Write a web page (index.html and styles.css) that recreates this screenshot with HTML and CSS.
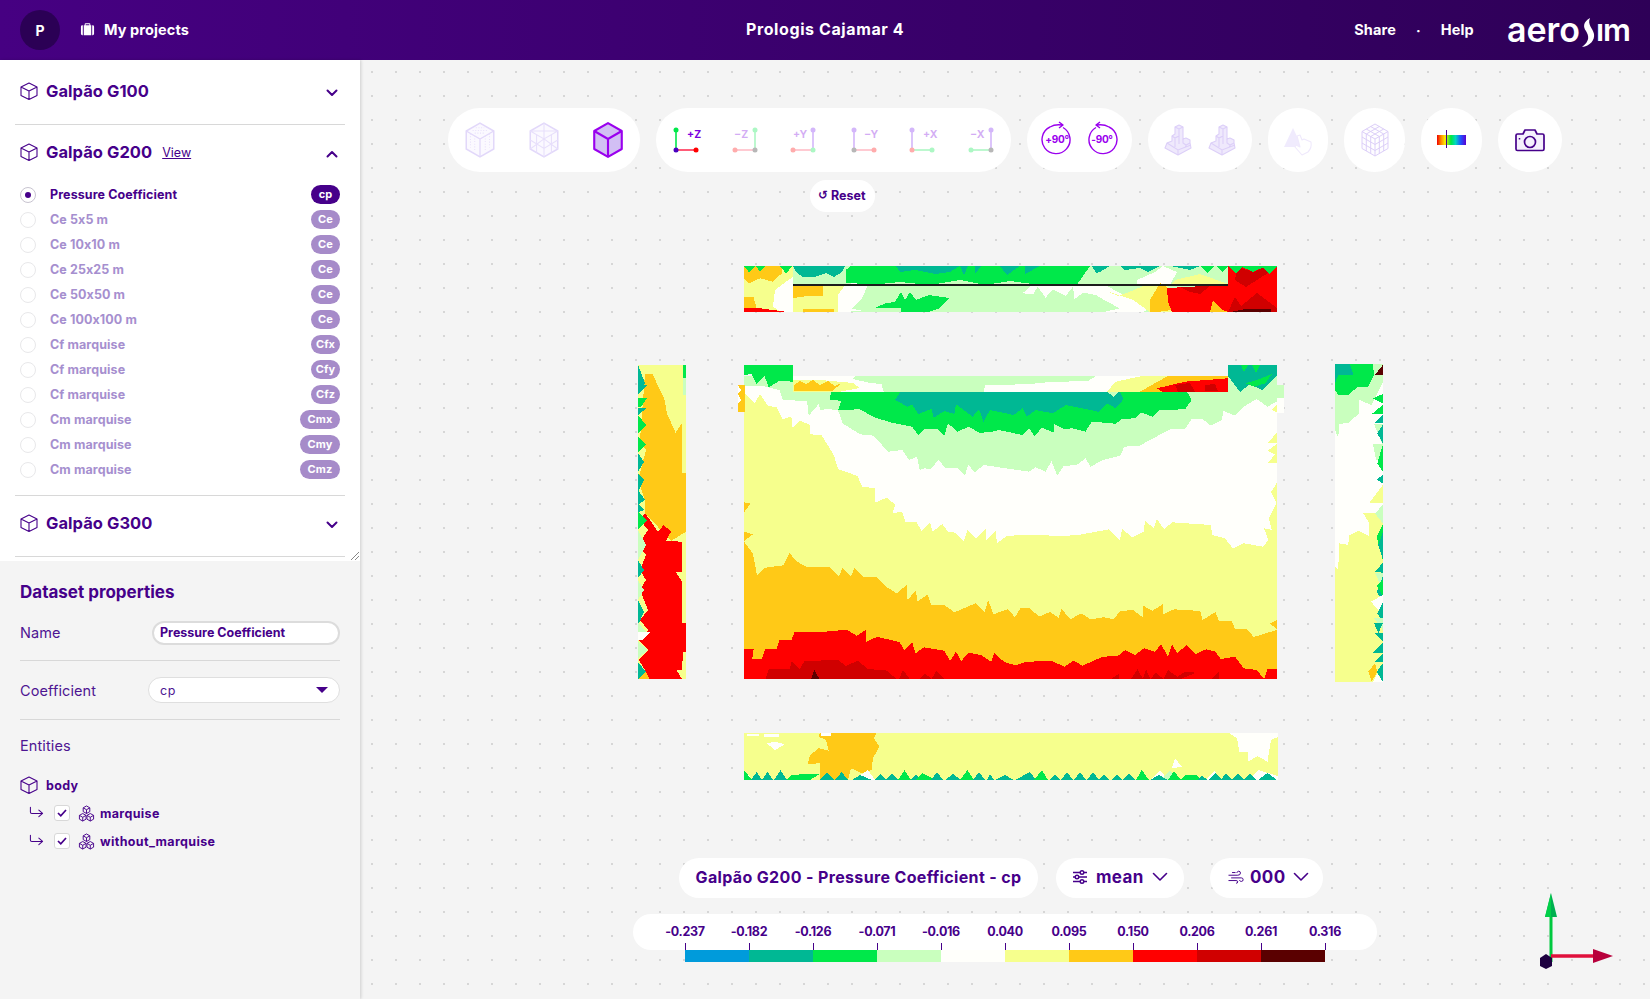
FILE: index.html
```html
<!DOCTYPE html>
<html lang="en">
<head>
<meta charset="utf-8">
<title>Prologis Cajamar 4</title>
<link rel="stylesheet" href="styles.css">
</head>
<body>
<svg class="defs" width="0" height="0" aria-hidden="true">
  <symbol id="cube" viewBox="0 0 20 20"><path d="M10 2 L18 6 V14.500 L10 18.500 L2 14.500 V6 Z M2 6 L10 10 L18 6 M10 10 V18.500" fill="none" stroke="currentColor" stroke-width="1.100" stroke-linejoin="round"/></symbol>
  <symbol id="cubes" viewBox="0 0 18 18"><path d="M9 1 L12.500 3 V7 L9 9 L5.500 7 V3 Z M5.500 3 L9 5 L12.500 3 M9 5 V9 M5 9 L8.500 11 V15 L5 17 L1.500 15 V11 Z M1.500 11 L5 13 L8.500 11 M5 13 V17 M13 9 L16.500 11 V15 L13 17 L9.500 15 V11 Z M9.500 11 L13 13 L16.500 11 M13 13 V17" fill="none" stroke="currentColor" stroke-width="1" stroke-linejoin="round"/></symbol>
  <symbol id="chev" viewBox="0 0 12 8"><path d="M1.500 1.500 L6 6 L10.500 1.500" fill="none" stroke="currentColor" stroke-width="2" stroke-linecap="round" stroke-linejoin="round"/></symbol>
  <symbol id="chev-thin" viewBox="0 0 16 10"><path d="M1.500 1.500 L8 8 L14.500 1.500" fill="none" stroke="currentColor" stroke-width="1.600" stroke-linecap="round" stroke-linejoin="round"/></symbol>
  <symbol id="sub" viewBox="0 0 16 12"><path d="M1.500 1 V6 Q1.500 7.500 3 7.500 H14 M10.500 4 L14.500 7.500 L10.500 11" fill="none" stroke="currentColor" stroke-width="1.100" stroke-linecap="round" stroke-linejoin="round"/></symbol>
  <symbol id="city" viewBox="0 0 28 32"><path d="M14 31 L1 24 L3 19 L8 17 V12 L11 10 V3 L15 1 L19 3 V15 L22 14 L26 16 V19 L27 24 Z" fill="#efe9fc" stroke="#dccff8" stroke-width="1.100" stroke-linejoin="round"/><path d="M11 3 L15 5 L19 3 M15 5 V14 M8 12 L11 14 L15 12 V20 M11 14 V23 M19 15 V19 L22 21 L26 19 M22 21 V24 M3 19 L14 26 L27 21 M14 26 V31" fill="none" stroke="#dccff8" stroke-width="1.100"/></symbol>
</svg>

<header class="topbar">
  <div class="top-left">
    <div class="avatar">P</div>
    <a class="top-link">
      <svg class="brief" viewBox="0 0 16 16"><path d="M5 3.500 V2.200 Q5 1.200 6 1.200 H10 Q11 1.200 11 2.200 V3.500 H10 V2.400 H6 V3.500 Z M1 5 Q1 3.500 2.500 3.500 H3 V14 H2.500 Q1 14 1 12.500 Z M4 3.500 H12 V14 H4 Z M13 3.500 H13.500 Q15 3.500 15 5 V12.500 Q15 14 13.500 14 H13 Z" fill="#fff"/></svg>
      My projects
    </a>
  </div>
  <div class="top-title">Prologis Cajamar 4</div>
  <div class="top-right">
    <a class="top-nav">Share</a>
    <span class="top-dot">·</span>
    <a class="top-nav">Help</a>
    <div class="logo" aria-label="aerosim">
      <span>aero</span>
      <svg class="logo-s" viewBox="0 0 14 30"><path d="M9 0 C2 4 2 9 5 13 C8 18 9 23 1 29 C9 28 14 22 13 16 C12 10 6 7 9 0 Z" fill="#fff"/></svg>
      <span class="logo-end">ım</span>
    </div>
  </div>
</header>

<div class="main">
  <aside class="sidebar">
    <div class="tree">
      <section class="item item-first">
        <div class="item-head">
          <svg class="ic20"><use href="#cube"/></svg>
          <h2>Galpão G100</h2>
          <svg class="chev"><use href="#chev"/></svg>
        </div>
      </section>
      <section class="item item-open">
        <div class="item-head">
          <svg class="ic20"><use href="#cube"/></svg>
          <h2>Galpão G200</h2>
          <a class="view">View</a>
          <svg class="chev chev-up"><use href="#chev"/></svg>
        </div>
        <ul class="datasets">
          <li class="ds ds-on"><span class="radio"></span><span class="ds-name">Pressure Coefficient</span><span class="badge">cp</span></li>
          <li class="ds"><span class="radio"></span><span class="ds-name">Ce 5x5 m</span><span class="badge">Ce</span></li>
          <li class="ds"><span class="radio"></span><span class="ds-name">Ce 10x10 m</span><span class="badge">Ce</span></li>
          <li class="ds"><span class="radio"></span><span class="ds-name">Ce 25x25 m</span><span class="badge">Ce</span></li>
          <li class="ds"><span class="radio"></span><span class="ds-name">Ce 50x50 m</span><span class="badge">Ce</span></li>
          <li class="ds"><span class="radio"></span><span class="ds-name">Ce 100x100 m</span><span class="badge">Ce</span></li>
          <li class="ds"><span class="radio"></span><span class="ds-name">Cf marquise</span><span class="badge">Cfx</span></li>
          <li class="ds"><span class="radio"></span><span class="ds-name">Cf marquise</span><span class="badge">Cfy</span></li>
          <li class="ds"><span class="radio"></span><span class="ds-name">Cf marquise</span><span class="badge">Cfz</span></li>
          <li class="ds"><span class="radio"></span><span class="ds-name">Cm marquise</span><span class="badge badge-w">Cmx</span></li>
          <li class="ds"><span class="radio"></span><span class="ds-name">Cm marquise</span><span class="badge badge-w">Cmy</span></li>
          <li class="ds"><span class="radio"></span><span class="ds-name">Cm marquise</span><span class="badge badge-w">Cmz</span></li>
        </ul>
      </section>
      <section class="item item-last">
        <div class="item-head">
          <svg class="ic20"><use href="#cube"/></svg>
          <h2>Galpão G300</h2>
          <svg class="chev"><use href="#chev"/></svg>
        </div>
      </section>
      <svg class="grip" viewBox="0 0 8 8"><path d="M8 0 L0 8 M8 4 L4 8" stroke="#888" stroke-width="1" fill="none"/></svg>
    </div>

    <div class="props">
      <h3>Dataset properties</h3>
      <div class="prop-row prop-name">
        <label>Name</label>
        <div class="input">Pressure Coefficient</div>
      </div>
      <div class="prop-row prop-coef">
        <label>Coefficient</label>
        <div class="select"><span>cp</span><i class="tri"></i></div>
      </div>
      <div class="entities-label">Entities</div>
      <div class="ent-body"><svg class="ic20"><use href="#cube"/></svg><b>body</b></div>
      <div class="ent-child">
        <svg class="ic-sub"><use href="#sub"/></svg>
        <span class="check"><svg viewBox="0 0 10 8"><path d="M1 4 L3.800 6.800 L9 1" fill="none" stroke="currentColor" stroke-width="1.700"/></svg></span>
        <svg class="ic-cubes"><use href="#cubes"/></svg>
        <b>marquise</b>
      </div>
      <div class="ent-child">
        <svg class="ic-sub"><use href="#sub"/></svg>
        <span class="check"><svg viewBox="0 0 10 8"><path d="M1 4 L3.800 6.800 L9 1" fill="none" stroke="currentColor" stroke-width="1.700"/></svg></span>
        <svg class="ic-cubes"><use href="#cubes"/></svg>
        <b>without_marquise</b>
      </div>
    </div>
  </aside>

  <main class="canvas">
    <div class="toolbar">
      <div class="tgroup g-cubes">
        <svg class="hex" viewBox="0 0 30 34"><path d="M15 1 L28 8.500 V25.500 L15 33 L2 25.500 V8.500 Z" fill="#fbf9ff" stroke="#e2d8fa" stroke-width="1.400"/><path d="M2 8.500 L15 16 L28 8.500 M15 16 V33" fill="none" stroke="#e2d8fa" stroke-width="1.200"/><path d="M6 11 V24 M10 13 V27 M20 13 V27 M24 11 V24 M8 8 L22 8 M11 5.500 H19 M10 10.500 H20" stroke="#e9e1fb" stroke-width="1" stroke-dasharray="1 1.500" fill="none"/></svg>
        <svg class="hex" viewBox="0 0 30 34"><path d="M15 1 L28 8.500 V25.500 L15 33 L2 25.500 V8.500 Z" fill="#fbf9ff" stroke="#e2d8fa" stroke-width="1.400"/><path d="M2 8.500 L15 16 L28 8.500 M15 16 V33 M15 1 V16 M2 8.500 L28 8.500 M2 25.500 L15 16 L28 25.500 M8 12 L8 29 M22 12 L22 29 M2 17 L15 25 L28 17" fill="none" stroke="#e7dffb" stroke-width="1"/></svg>
        <svg class="hex" viewBox="0 0 30 34"><path d="M15 1 L28 8.500 V25.500 L15 33 L2 25.500 V8.500 Z" fill="#d2bff4" stroke="#9a00ee" stroke-width="2" stroke-linejoin="round"/><path d="M2 8.500 L15 16 L28 8.500 M15 16 V33" fill="none" stroke="#9a00ee" stroke-width="2"/></svg>
      </div>
      <div class="tgroup g-axes">
        <svg class="axis" viewBox="0 0 40 32"><path d="M10 6 V26" stroke="#00e84a" stroke-width="1.600"/><path d="M10 26 H30" stroke="#ff3355" stroke-width="1.600"/><circle cx="10" cy="6" r="2.500" fill="#00e84a"/><circle cx="10" cy="26" r="2.500" fill="#4a00c0"/><circle cx="30" cy="26" r="2.500" fill="#ff0000"/><text x="21" y="14" class="ax-t">+Z</text></svg>
        <svg class="axis axis-off" viewBox="0 0 40 32"><path d="M30 6 V26" stroke="#00e84a" stroke-width="1.600"/><path d="M10 26 H30" stroke="#ff3355" stroke-width="1.600"/><circle cx="30" cy="6" r="2.500" fill="#00e84a"/><circle cx="30" cy="26" r="2.500" fill="#222"/><circle cx="10" cy="26" r="2.500" fill="#ff0000"/><text x="9" y="14" class="ax-t">−Z</text></svg>
        <svg class="axis axis-off" viewBox="0 0 40 32"><path d="M29 6 V26" stroke="#7a20f0" stroke-width="1.600"/><path d="M9 26 H29" stroke="#ff3355" stroke-width="1.600"/><circle cx="29" cy="6" r="2.500" fill="#7a20f0"/><circle cx="29" cy="26" r="2.500" fill="#00e84a"/><circle cx="9" cy="26" r="2.500" fill="#ff0000"/><text x="9" y="14" class="ax-t">+Y</text></svg>
        <svg class="axis axis-off" viewBox="0 0 40 32"><path d="M11 6 V26" stroke="#7a20f0" stroke-width="1.600"/><path d="M11 26 H31" stroke="#ff3355" stroke-width="1.600"/><circle cx="11" cy="6" r="2.500" fill="#7a20f0"/><circle cx="11" cy="26" r="2.500" fill="#222"/><circle cx="31" cy="26" r="2.500" fill="#ff0000"/><text x="21" y="14" class="ax-t">−Y</text></svg>
        <svg class="axis axis-off" viewBox="0 0 40 32"><path d="M10 6 V26" stroke="#7a20f0" stroke-width="1.600"/><path d="M10 26 H30" stroke="#00e84a" stroke-width="1.600"/><circle cx="10" cy="6" r="2.500" fill="#7a20f0"/><circle cx="10" cy="26" r="2.500" fill="#ff0000"/><circle cx="30" cy="26" r="2.500" fill="#00e84a"/><text x="21" y="14" class="ax-t">+X</text></svg>
        <svg class="axis axis-off" viewBox="0 0 40 32"><path d="M30 6 V26" stroke="#7a20f0" stroke-width="1.600"/><path d="M10 26 H30" stroke="#00e84a" stroke-width="1.600"/><circle cx="30" cy="6" r="2.500" fill="#7a20f0"/><circle cx="30" cy="26" r="2.500" fill="#222"/><circle cx="10" cy="26" r="2.500" fill="#00e84a"/><text x="9" y="14" class="ax-t">−X</text></svg>
      </div>
      <div class="tgroup g-rot">
        <svg class="rot" viewBox="0 0 32 36"><path d="M9 7 A14 14 0 1 0 22 7.500 M9 7 Q14 4 21 5 M18 2 L22 5 L18 8" fill="none" stroke="#9a00ee" stroke-width="1.400" stroke-linejoin="round"/><text x="16" y="23" class="rot-t">+90°</text></svg>
        <svg class="rot" viewBox="0 0 32 36"><path d="M23 7 A14 14 0 1 1 10 7.500 M23 7 Q18 4 11 5 M14 2 L10 5 L14 8" fill="none" stroke="#9a00ee" stroke-width="1.400" stroke-linejoin="round"/><text x="16" y="23" class="rot-t">-90°</text></svg>
      </div>
      <div class="tgroup g-city">
        <svg class="city"><use href="#city"/></svg>
        <svg class="city"><use href="#city"/></svg>
      </div>
      <div class="tgroup g-s60">
        <svg class="ic-pick" viewBox="0 0 30 32"><path d="M10 4 L19 23 H1 Z" fill="#f0ebfd"/><path d="M14 12 L17 11 L19 16 L21 15 L28 18 Q29 24 25 28 L19 31 L12 23 L13 21 L17 23 Z" fill="#fff" stroke="#efe9fc" stroke-width="1.100" stroke-linejoin="round"/></svg>
      </div>
      <div class="tgroup g-s61">
        <svg class="hex hex-grid" viewBox="0 0 30 34"><path d="M15 1 L28 8.500 V25.500 L15 33 L2 25.500 V8.500 Z M2 8.500 L15 16 L28 8.500 M15 16 V33 M6.300 11 V28 M10.700 13.500 V30.500 M19.300 13.500 V30.500 M23.700 11 V28 M2 14 L15 21.500 L28 14 M2 20 L15 27.500 L28 20 M6.300 6 L19.300 13.500 M10.700 3.500 L23.700 11 M23.700 6 L10.700 13.500 M19.300 3.500 L6.300 11" fill="#fdfcff" stroke="#dccff8" stroke-width="1"/></svg>
      </div>
      <div class="tgroup g-s61">
        <div class="rainbow"><i class="rainbow-line"></i></div>
      </div>
      <div class="tgroup g-s64">
        <svg class="camera" viewBox="0 0 30 24"><path d="M2.500 6 H8 L10 2 H20 L22 6 H27.500 Q29 6 29 7.500 V21 Q29 22.500 27.500 22.500 H2.500 Q1 22.500 1 21 V7.500 Q1 6 2.500 6 Z" fill="#f5f0fd" stroke="#46008a" stroke-width="1.700" stroke-linejoin="round"/><circle cx="15" cy="14" r="5.500" fill="none" stroke="#46008a" stroke-width="1.700"/><path d="M4.500 10 V11.500" stroke="#46008a" stroke-width="1.500"/></svg>
      </div>
    </div>

    <div class="reset-row"><button class="reset"><span class="reset-ic">↺</span> Reset</button></div>

    <div class="stage">
      <svg class="heat" viewBox="620 260 780 530" shape-rendering="crispEdges">
        <!-- top elevation -->
        <rect class="lg" x="793" y="266" width="435" height="46"/>
        <rect class="ye" x="744" y="266" width="49" height="46"/>
        <polygon class="wh" points="793,268 793,312 781,312 773,306.700 775,290 793,276.700"/>
        <polygon class="or" points="744,266 781.800,266 781.800,273.300 773,281.700 760,278.300 749.300,283.300 744,278.300"/>
        <polygon class="or" points="744,296.700 753.600,297.300 756.600,308.300 744,308.300"/>
        <polygon class="re" points="744,308.300 760,308.300 790.500,312.300 744,312.300"/>
        <polygon class="gr" points="744,266 755.800,266 749.300,272.700"/>
        <polygon class="gr" points="755.800,266 765,266 760,272"/>
        <polygon class="gr" points="779.600,266 792.600,266 786,273.300"/>
        <polygon class="te" points="793,266 845,266 842,272 834,277 826,273 815,277 803,277 796,272"/>
        <polygon class="gr" points="845.500,283 845.500,270 851,266 1090,266 1076.700,285 1040,285 1010,281 985,285 960,280 930,285 900,282 880,284 860,284 850,283"/>
        <polygon class="te" points="896,266 960,266 950,272 935,274 915,270 900,272"/>
        <polygon class="te" points="960,266 968,266 964,275"/>
        <polygon class="te" points="975,266 981,266 975,274"/>
        <polygon class="te" points="1000,266 1020,266 1007,275"/>
        <polygon class="te" points="1025,266 1040,266 1025,274"/>
        <polygon class="te" points="1092,266 1110,266 1100,272 1096,273"/>
        <polygon class="te" points="1120,266 1160,266 1148,272 1140,268 1125,270"/>
        <polygon class="te" points="1170,266 1200,266 1190,270 1180,268"/>
        <polygon class="wh" points="1137,285 1137,280 1155,272 1163,266 1177,272 1170,285"/>
        <polygon class="ye" points="1170,285 1175,280 1200,274 1228,284 1228,285"/>
        <polygon class="gr" points="1201,266 1207,273 1215,266"/>
        <polygon class="gr" points="1216,266 1222,272 1228,266"/>
        <!-- below the line -->
        <polygon class="ye" points="793,285 845,285 848,295 840,312 793,312"/>
        <polygon class="or" points="793,285 823,285 823,296 808,296 793,298"/>
        <polygon class="or" points="803,309 834,309 834,312 803,312"/>
        <polygon class="wh" points="853,283 868,285 862,298 848,312 846,312 838,312 838,295 845,285"/>
        <polygon class="wh" points="846,309 866,310 846,312"/>
        <polygon class="gr" points="875,308 886,303 895,302 901,292 905,300 910,292 916,300 929,295 949,298 940,308 929,312 901,312 901,308"/>
        <polygon class="wh" points="1022.500,293.300 1031,286 1107,286 1133,300 1148,309.300 1142,312.300 1102.700,312.300 1120,308.300 1107,301.700 1096,295 1083,292.700 1074.500,299 1073,286.700 1065.800,296 1052.800,289.300 1045.500,297.700 1037.700,286.700 1033.300,294.300"/>
        <polygon class="ye" points="1107,291 1118,296 1130,291.700 1144,285.700 1168,285.700 1172,312 1150,312 1133,300"/>
        <polygon class="or" points="1150,312 1150,300 1160,283 1168,288 1172,310 1157,312"/>
        <polygon class="re" points="1167,288 1228,285 1228,312 1172,312 1168,302"/>
        <polygon class="dr" points="1180,287 1210,286 1200,294 1190,292"/>
        <polygon class="or" points="1210,312 1213,300 1222,310 1228,312"/>
        <!-- right block of the top elevation -->
        <rect class="re" x="1228" y="266" width="48.600" height="46"/>
        <polygon class="dr" points="1237,267 1254,272 1265,266 1268,273 1246,287 1235,280"/>
        <polygon class="dr" points="1228,312 1235,297 1241,306 1257,293 1277,308 1277,312"/>
        <polygon class="bk" points="1230,312 1246,309 1271,309 1271,312"/>
        <polygon class="gr" points="1228,266 1236,273 1244,266"/>
        <polygon class="gr" points="1240,266 1253,272 1266,266"/>
        <polygon class="gr" points="1262,266 1269,274 1277,266"/>
        <line class="ln" x1="793" y1="285" x2="1228" y2="285"/>

        <!-- left elevation -->
        <rect class="ye" x="638" y="364.500" width="48" height="314.500"/>
        <rect class="ye" x="683" y="623" width="3" height="56"/>
        <polygon class="or" points="645,374 652.500,374 664.700,400 666.900,413.300 675.500,432.700 682,423.300 682,473 686,473 686,531.700 671,541 645,513 645,500 638,480 646,450 640,440"/>
        <polygon class="re" points="645,513 658,531.700 663.800,525 671,531.700 666,541 682,541.700 682,571.700 675.500,571.700 682,581.700 682,623 686,623 686,651.700 683,651.700 682,670 676.400,670 682,679 649.500,679 645,670 638.700,660 648,650 638.700,640 648,630 640,620 648,610 640,590 646,580 640,570 646,555 638,545 648,530 640,520"/>
        <polygon class="or" points="638,679 645,670 649.500,679"/>
        <polygon class="gr" points="683,364.500 686,364.500 686,378 683,378"/>
        <polygon class="lg" points="683,378 686,378 686,395 683,395"/>
        <polygon class="te" points="638,365 645,383 638,393"/>
        <polygon class="te" points="638,385 647,385 638,395"/>
        <polygon class="gr" points="638,398 647,398 641,407 638,407"/>
        <polygon class="te" points="638,408 647,408 638,415"/>
        <polygon class="gr" points="638,415 646,425 638,433"/>
        <polygon class="gr" points="638,436 646,445 638,452"/>
        <polygon class="te" points="638,453 644,462 638,472"/>
        <polygon class="te" points="638,474 644,480 638,492"/>
        <polygon class="te" points="638,490 645,500 638,505"/>
        <polygon class="te" points="638,503 644,510 638,512"/>
        <polygon class="gr" points="638,512 647,520 638,530"/>
        <polygon class="lg" points="638,530 646,545 638,560"/>
        <polygon class="te" points="638,560 644,570 638,578"/>
        <polygon class="lg" points="638,580 644,590 638,600"/>
        <polygon class="te" points="638,600 644,612 638,625"/>
        <polygon class="lg" points="638,622 646,632 638,640"/>
        <polygon class="wh" points="638,632 650,632 642,640 638,640"/>
        <polygon class="lg" points="638,642 648,650 638,658"/>
        <polygon class="te" points="638,662 646,672 638,679"/>

        <!-- plan -->
        <rect class="re" x="744" y="385" width="532.600" height="294"/>
        <polygon class="dr" points="765.700,679 768.800,669.300 789.600,669.300 791.800,661 800,669.300 804.300,661 838.200,660 846,666 857.700,660.700 868.500,669.300 885.900,670 896.700,679"/>
        <polygon class="dr" points="899,679 903,670 909.700,679"/>
        <polygon class="dr" points="919.700,679 925,673.300 931.400,679"/>
        <polygon class="dr" points="931.400,679 936.600,670.700 944.400,679"/>
        <polygon class="dr" points="1111.400,679 1119.200,673.300 1119.200,679"/>
        <polygon class="dr" points="1130.900,679 1137.400,669.300 1143,679 1146,669.300 1150.400,679 1156,672.700 1163.400,679 1167.800,670 1177.300,676.700 1185,671.700 1196,672.700 1180.800,679"/>
        <polygon class="dr" points="1211,679 1219,671 1219,679"/>
        <polygon class="bk" points="811.300,679 814.300,670 819.500,679"/>
        <polygon class="or" points="744,385 1276.600,385 1276.600,669 1267.500,669.300 1264,679 1256.700,670 1243.700,668.300 1235,656.700 1220.700,659 1215.500,651.700 1206,649.300 1196,654 1186.400,645 1177.300,653.300 1172,644.300 1167.800,656.700 1161.300,644.300 1154.800,651.700 1143.900,648.300 1135.200,655 1125.200,650 1117.900,656 1102.700,656.700 1082.300,665.700 1073.700,660.700 1064.600,666.700 1051.600,661 1026.800,661.700 1015,665.300 1003.800,661.700 994.300,652.700 991.300,662 981.300,655 968.300,652.700 961.300,661 956,651.700 950,661 944.400,650.700 924,647.300 915.400,653.300 912.300,642.300 904,650 899.800,642.300 877.200,636.700 866.400,642 865.900,630 856.800,635.700 846.800,629.700 825,631.700 794.800,631.700 791.300,640 779.600,640 776.600,649 765,649 761.800,659 752.300,659 753.600,649 744,649.300"/>
        <polygon class="ye" points="744,385 1276.600,385 1276.600,630 1253.600,637 1246.700,628.700 1235,629 1232,621.300 1219,621 1215.500,612 1202.500,620 1200.300,611 1174.300,609.300 1163.400,614 1162.600,604.300 1152.600,610.700 1143,605.700 1142.600,617.300 1133,610 1120,611 1113.600,619.300 1103.600,617.300 1090.600,619.300 1081,613.300 1070.600,619.300 1061.500,609 1058.500,617.700 1049.800,612 1039,616.700 1030,608.300 1020.300,608.300 1015,617.300 1008,609 993.400,614.300 988.200,600 984.800,612 976,603 954.400,612.300 944.400,605 931.400,605.300 927.500,594.700 917,601.700 916.200,590 907.600,600 906.700,585 896.700,593.300 886,586.700 876,576.700 863.300,576.700 854.700,567.700 851,576.300 842.500,567.700 839,576.700 829.500,567.300 807,567 797,561.700 789.600,553.300 783.500,565.300 765.300,567.700 757,575 752.700,553.300 744,541.700"/>
        <polygon class="or" points="1270,623.300 1276.600,620 1276.600,629.300"/>
        <polygon class="or" points="744,502.300 750.600,503.300 744,512.300"/>
        <polygon class="or" points="744,531.700 753,534.300 744,541"/>
        <polygon class="wh" points="744,385 1276.600,385 1276.600,483.300 1271,492.300 1276.600,502.700 1268.800,518.300 1271.900,530 1264,528.300 1268.400,540 1263,546.700 1243.700,543.300 1232.800,548.300 1225,538.300 1212,535 1211,525 1172,522.300 1164.300,529.300 1156.900,519.300 1153.900,528.300 1144.800,520.700 1144,531.700 1131.800,537.700 1122.200,528.300 1120,540 1109.200,529.300 1076.700,535.300 1052.800,536 1042,534.700 1007.300,535.700 997,543.300 995.600,531 985.600,541 985.600,529.300 975.700,538.300 967.400,530 964,541 955.300,532.700 948,531.700 942.300,524 932.700,531.700 930,522.300 921.400,530.700 916.200,521.700 905.400,521.700 902,511.700 892.400,513.300 895.400,504.700 886.700,497.700 875,502.700 875.500,488.300 862,486.700 857.700,476 838,469 833.800,455 821.700,435.300 810.400,434.300 810,425 800,420.700 792.600,427.700 791.300,416.700 782.700,419 776.600,407 768,406 760,394 755,403 744,393"/>
        <polygon class="ye" points="1267.500,442.700 1276.600,433.300 1276.600,443"/>
        <polygon class="ye" points="1267.500,451 1276.600,444 1276.600,455"/>
        <polygon class="ye" points="1267.500,463 1276.600,453 1276.600,463"/>
        <polygon class="ye" points="1272,410 1276.600,405 1276.600,412"/>
        <polygon class="lg" points="793,376 1228,376 1276.600,385 1276.600,401.700 1267.500,406.700 1256.700,399 1243.700,406.700 1235,415.700 1223.300,411 1222,420 1211,425.700 1202.500,419 1191.600,419 1185,429 1170,429.300 1139.600,445.700 1124.400,446.700 1120,455.700 1102.700,460 1090.600,466.700 1085.400,458.300 1076.700,465 1063.700,466 1057.200,475.700 1051.500,461 1045.500,471.700 1035.500,467.300 1029,471.700 983.500,465 974.800,472.300 968.300,465 964.800,475.700 957.400,468.300 945.300,468.300 938.800,460 930,469.300 925,468.300 919.700,470 917,456.700 908.900,460 902.400,450 888,451.700 873.700,435.700 860,434.300 842.500,423.300 838,410 825,409 820.800,410.700 818.700,404 808.700,415.700 807,401 782.700,400 779.600,390 755.800,384.300 793,384.300"/>
        <polygon class="gr" points="831.700,390 1186,390 1191.600,400 1185,409.300 1160,410 1152.600,416.700 1140.900,412.300 1135.200,418.300 1122.200,419 1115.700,423.700 1091.900,421.700 1085.400,431.700 1072.400,428.300 1063.700,429 1053.700,424 1054,432.700 1042,427.700 1034.600,436 1029,428.300 1022.500,435 998.600,430 990,432.300 979,432.700 969,426.700 957.400,431.700 947.900,423.300 944.400,435.700 937,429 925,429 918.400,435 911.900,426.700 890,422.300 872.900,416.700 860,409.300 838,410 841.200,400.700 829.500,400"/>
        <polygon class="te" points="901.900,390 1118.800,390 1123.500,399.300 1115.700,408.300 1107,403.300 1098.400,411.700 1065.900,405 1052.800,413.300 1035.500,410 1026.800,416.700 1022.500,408.300 1013.800,415 990,410 983.500,421.700 979,409.300 972.600,416.700 956,404.300 954.400,414 944.400,411 933.600,417.700 931.400,409 918.400,414 911.900,404.300 907.600,406.700 895,400"/>
        <polygon class="lg" points="1107,391.700 1113,391.700 1118.800,391.700 1114,397"/>
        <!-- corners of the plan -->
        <rect class="lg" x="744" y="376" width="49" height="10"/>
        <polygon class="gr" points="744,365 793,365 793,381.700 779.600,380.700 768.800,387.300 764.500,376 756.600,384.300 751.400,374 744,375"/>
        <rect class="lg" x="1228" y="365" width="48.600" height="20"/>
        <polygon class="lg" points="1228,385 1276.600,385 1255,392 1245,392 1228,392"/>
        <polygon class="te" points="1228,365 1276.600,365 1276.600,376 1262,390 1250,384 1240,392 1228,376"/>
        <polygon class="gr" points="1241.500,381.700 1254.500,386.700 1265.300,383.300 1271.900,374 1258.900,379.300 1245.800,383.300"/>
        <polygon class="gr" points="1241,365 1244,372 1248,365"/>
        <polygon class="gr" points="1252,365 1256,373 1260,365"/>
        <rect class="or" x="737.500" y="385" width="7" height="27"/>
        <polygon class="wh" points="737.500,385 738,385 741,390 738,394 741,400 738,404 737.500,404"/>
        <rect class="lg" x="1276.600" y="385" width="7" height="13"/>
        <rect class="wh" x="1276.600" y="398" width="7" height="15"/>
        <!-- marquise strip of the plan -->
        <rect class="wh" x="793" y="376" width="435" height="15.700"/>
        <polygon class="lg" points="855.500,376 1096,376 1088,381 1050,382 1030,384 1000,385 985.600,385 983.500,391.700 883.700,391.700 881.500,384 870,383 853,379"/>
        <polygon class="wh" points="985,391.700 987,387 996,388 1000,385 1012,386 1016,391.700"/>
        <polygon class="ye" points="793,380 820,380 853,383 860,388 840,391.700 793,391.700"/>
        <polygon class="or" points="794,385 800,381 806,384 813,380 820,385 828,381 835,386 842,383 832,391 794,391"/>
        <polygon class="ye" points="1107,391.700 1115.700,381.700 1141.800,376 1228,376 1228,391.700"/>
        <polygon class="or" points="1140,391.700 1150,386 1167.800,376 1228,376 1228,391.700"/>
        <polygon class="re" points="1157,388.300 1185,381.700 1228,378.300 1228,391.700 1162,391.700"/>
        <polygon class="dr" points="1175,385 1190,383 1195,391.700 1178,391.700"/>
        <polygon class="dr" points="1205,385 1215,384 1218,391 1205,391"/>

        <!-- right elevation -->
        <rect class="ye" x="1335" y="364" width="47.700" height="317.700"/>
        <polygon class="wh" points="1335,364 1382.700,364 1382.700,523.300 1375,513.300 1363.300,513.300 1369.300,523.300 1369,536 1358.300,530.700 1349,535.700 1348.300,545 1339,543.300 1338.300,570 1335,566.700"/>
        <polygon class="lg" points="1335,364 1382.700,364 1382.700,383 1371.700,405 1359.300,400 1359.300,413.300 1348.300,422.700 1339,424 1338.300,438.300 1335,430"/>
        <polygon class="gr" points="1335,364 1373,364 1374,375 1368,386.700 1358,386.700 1348,395 1338.300,395 1335,390"/>
        <polygon class="te" points="1335,364 1350,364 1353.300,375 1338.300,375 1335,383"/>
        <polygon class="bk" points="1382.700,365 1375,375 1382.700,375"/>
        <polygon class="lg" points="1373,364 1382.700,364 1375,375"/>
        <polygon class="gr" points="1382.700,394 1372.700,398.300 1382.700,403.300"/>
        <polygon class="gr" points="1382.700,405 1371.700,414 1382.700,414"/>
        <polygon class="te" points="1382.700,415 1374,423.300 1382.700,423.300"/>
        <polygon class="lg" points="1374,424 1382.700,424 1382.700,445"/>
        <polygon class="te" points="1382.700,425 1377.300,433.300 1382.700,443.300"/>
        <polygon class="lg" points="1373,444 1382.700,444 1382.700,460 1376,460"/>
        <polygon class="gr" points="1382.700,445 1377.300,463.300 1382.700,471.700"/>
        <polygon class="te" points="1382.700,475 1376.700,479.300 1382.700,483.300"/>
        <polygon class="ye" points="1382.700,485 1369,503.300 1382.700,503.300"/>
        <polygon class="lg" points="1382.700,505 1375,513.300 1382.700,523.300"/>
        <polygon class="gr" points="1382.700,525 1376.700,536.700 1382.700,560"/>
        <polygon class="te" points="1382.700,533 1378,545 1382.700,558"/>
        <polygon class="te" points="1382.700,563 1375,571.700 1382.700,572.700"/>
        <polygon class="lg" points="1375,572.700 1382.700,572.700 1382.700,590"/>
        <polygon class="te" points="1382.700,577 1376.700,591.700 1382.700,601.700"/>
        <polygon class="gr" points="1382.700,580 1377,586 1382.700,596"/>
        <polygon class="wh" points="1382.700,595 1371,601.700 1382.700,615"/>
        <polygon class="te" points="1382.700,603 1377.300,613.300 1382.700,621.700"/>
        <polygon class="lg" points="1374,618 1382.700,618 1382.700,630"/>
        <polygon class="te" points="1374,623.300 1382.700,623.300 1378.300,633.300"/>
        <polygon class="te" points="1375,633.300 1382.700,641.700 1382.700,633.300"/>
        <polygon class="te" points="1373.300,652.700 1382.700,643.300 1382.700,652.700"/>
        <polygon class="te" points="1375,661.700 1382.700,653.300 1382.700,661.700"/>
        <polygon class="te" points="1382.700,663.300 1376.700,671.700 1382.700,681.700"/>
        <polygon class="or" points="1368.300,671.700 1375,663.300 1377.300,671.700 1371.700,681.700"/>
        <polygon class="wh" points="1373.300,681.700 1377.300,673.300 1382.700,681.700"/>

        <!-- bottom elevation -->
        <rect class="ye" x="744" y="733" width="534" height="47"/>
        <polygon class="or" points="820,732.700 877,732.700 873.700,738 879.400,746.700 872.900,758.300 871.600,770 862,773.300 851,768.300 848,780 820,780 820,763.300 807.800,764 810,755 818.700,748.300 828.600,750.700 826,740 818.700,736.700"/>
        <polygon class="wh" points="1228.500,732.700 1278,732.700 1278,737 1271,740 1267.500,761.700 1257.500,756 1248,761.700 1248,751.700 1239.300,751.700 1237,738.300"/>
        <polygon class="wh" points="766.600,743.300 775,741.700 784.800,744.300 775,750"/>
        <rect class="wh" x="747" y="734" width="12" height="2"/>
        <rect class="wh" x="764" y="734" width="15" height="3"/>
        <rect class="wh" x="821" y="733" width="10" height="3"/>
        <polygon class="wh" points="1172,768 1175,758 1182,767"/>
        <polygon class="wh" points="744,775 748,774 752,780 744,780"/>
        <polygon class="wh" points="853,780 868,770 875,780"/>
        <polygon class="wh" points="1150,780 1160,770 1168,780"/>
        <polygon class="lg" points="1160,780 1170,771 1180,780"/>
        <polygon class="wh" points="1205,780 1215,770 1218,780"/>
        <polygon class="wh" points="1248,780 1258,770 1278,776 1278,780"/>
        <polygon class="gr" points="786,780 792,775 806,774 820,774 810,780"/>
        <polygon class="gr" points="1180,780 1186,775 1196,775 1202,780"/>
        <polygon class="gr" points="744,770 752,780 744,780"/>
        <polygon class="te" points="751,780 756.600,772 762,780"/>
        <polygon class="te" points="762,780 767.500,772 773,780"/>
        <polygon class="te" points="774,780 780.500,770 787,780"/>
        <polygon class="te" points="820,780 827,772 834,780"/>
        <polygon class="te" points="835,780 841.600,772 848,780"/>
        <polygon class="te" points="852,780 860,775 872,780"/>
        <polygon class="te" points="874,780 880,774 886,780"/>
        <polygon class="te" points="886,780 892,773 898,780"/>
        <polygon class="gr" points="898,780 904.500,770 911,780"/>
        <polygon class="te" points="911,780 916,774 921,780"/>
        <polygon class="gr" points="916,780 922,773 932,778 932,780"/>
        <polygon class="te" points="931,780 937,772 943,780"/>
        <polygon class="te" points="945,780 953,774 961,780"/>
        <polygon class="gr" points="960,780 967.400,770 974,780"/>
        <polygon class="te" points="973,780 979,772 985,780"/>
        <polygon class="te" points="987,780 990,774 994,780"/>
        <polygon class="te" points="995,780 1005,775 1014,780"/>
        <polygon class="te" points="1015,780 1030,772 1036,780"/>
        <polygon class="gr" points="1034,780 1042,770 1048,780"/>
        <polygon class="te" points="1049,780 1055,775 1061,780"/>
        <polygon class="te" points="1061,780 1067,772 1073,780"/>
        <polygon class="te" points="1074,780 1080,772 1086,780"/>
        <polygon class="te" points="1087,780 1093,772 1099,780"/>
        <polygon class="te" points="1098,780 1104,775 1110,780"/>
        <polygon class="te" points="1111,780 1117,775 1123,780"/>
        <polygon class="te" points="1123,780 1129,773 1135,780"/>
        <polygon class="gr" points="1136,780 1141.700,770 1149,780"/>
        <polygon class="te" points="1150,780 1159,775 1168,780"/>
        <polygon class="gr" points="1168,780 1174,771 1181,780"/>
        <polygon class="te" points="1197,780 1208,780 1202,776"/>
        <polygon class="te" points="1209,780 1215.500,773 1222,780"/>
        <polygon class="te" points="1221,780 1226,773 1232,780"/>
        <polygon class="te" points="1232,780 1238,773 1244,780"/>
        <polygon class="te" points="1244,780 1250,773 1256,780"/>
        <polygon class="te" points="1258,780 1267.500,773 1277,780"/>
      </svg>
    </div>

    <div class="pill-row">
      <div class="pill pill-title">Galpão G200 - Pressure Coefficient - cp</div>
      <div class="pill pill-mean">
        <svg class="pill-ic" viewBox="0 0 16 16"><path d="M1 3.500 H15 M1 8 H15 M1 12.500 H15" stroke="currentColor" stroke-width="1.500" fill="none"/><circle cx="10" cy="3.500" r="1.800" fill="#fff" stroke="currentColor" stroke-width="1.400"/><circle cx="5" cy="8" r="1.800" fill="#fff" stroke="currentColor" stroke-width="1.400"/><circle cx="10" cy="12.500" r="1.800" fill="#fff" stroke="currentColor" stroke-width="1.400"/></svg>
        mean
        <svg class="pill-chev"><use href="#chev-thin"/></svg>
      </div>
      <div class="pill pill-wind">
        <svg class="pill-ic pill-ic-w" viewBox="0 0 18 16"><path d="M1 6 H11 Q14 6 14 3.500 Q14 1.500 12 1.500 Q10.500 1.500 10 3 M4 9 H15 Q17 9 17 11 Q17 13 15 13 Q13.500 13 13 12 M1 12 H9 Q11 12 11 13.500 Q11 15 9.500 15 M5 3 H8" fill="none" stroke="currentColor" stroke-width="1.100" stroke-linecap="round"/></svg>
        000
        <svg class="pill-chev"><use href="#chev-thin"/></svg>
      </div>
    </div>

    <div class="legend">
      <div class="legend-labels">
        <span>-0.237</span><span>-0.182</span><span>-0.126</span><span>-0.071</span><span>-0.016</span><span>0.040</span><span>0.095</span><span>0.150</span><span>0.206</span><span>0.261</span><span>0.316</span>
      </div>
      <div class="legend-bar">
        <i class="s1"></i><i class="s2"></i><i class="s3"></i><i class="s4"></i><i class="s5"></i><i class="s6"></i><i class="s7"></i><i class="s8"></i><i class="s9"></i><i class="s10"></i>
      </div>
    </div>

    <svg class="triad" viewBox="0 0 90 90">
      <path d="M21 73 V28" stroke="#00c93f" stroke-width="3"/>
      <polygon points="21,4 27,28 15,28" fill="#00b050"/>
      <polygon points="21,4 21,28 15,28" fill="#00d048"/>
      <path d="M21 67 H63" stroke="#e0103c" stroke-width="3.500"/>
      <polygon points="63,60 83,67 63,74" fill="#b8003c"/>
      <polygon points="16,65 22,69 22,77 16,80 10,77 10,69" fill="#1d0040"/>
    </svg>
  </main>
</div>
</body>
</html>
```
FILE: styles.css
```css
* { box-sizing: border-box; }
html, body { margin: 0; padding: 0; height: 100%; }
body {
  width: 1650px;
  height: 999px;
  overflow: hidden;
  font-family: Inter, "Liberation Sans", sans-serif;
  color: #46008a;
  background: #f4f4f4;
}
.defs { position: absolute; }

/* top bar */
.topbar {
  height: 60px;
  display: flex;
  align-items: center;
  justify-content: space-between;
  padding: 0 20px;
  background: linear-gradient(90deg, #460082 0%, #2e0057 100%);
  color: #fff;
  position: relative;
}
.top-left { display: flex; align-items: center; }
.avatar {
  width: 40px;
  height: 40px;
  border-radius: 50%;
  background: #2b0055;
  display: flex;
  align-items: center;
  justify-content: center;
  font-weight: 700;
  font-size: 14px;
}
.top-link {
  display: flex;
  align-items: center;
  margin-left: 20px;
  font-weight: 700;
  font-size: 14.500px;
  letter-spacing: .1px;
  padding-bottom: 1px;
}
.brief { width: 15px; height: 15px; margin-right: 9px; }
.top-title {
  position: absolute;
  left: 746px;
  top: 19px;
  font-size: 16px;
  font-weight: 700;
  letter-spacing: .6px;
  line-height: 20px;
}
.top-right { display: flex; align-items: center; }
.top-nav { font-weight: 700; font-size: 14.500px; letter-spacing: .15px; padding-bottom: 1px; }
.top-dot { margin: 0 20px; font-weight: 700; font-size: 14px; }
.logo {
  display: flex;
  align-items: center;
  margin-left: 33px;
  font-size: 34px;
  font-weight: 600;
  line-height: 60px;
  height: 60px;
}
.logo-s { width: 14px; height: 30px; margin: 5px 1px 0 1px; }
.logo-end { font-size: 31px; letter-spacing: -1px; }

.main { display: flex; height: 939px; }

/* sidebar */
.sidebar {
  width: 360px;
  flex: none;
  display: flex;
  flex-direction: column;
  background: #f4f4f4;
  box-shadow: 1px 0 3px rgba(0,0,0,.16);
  position: relative;
  z-index: 2;
}
.tree {
  height: 501px;
  background: #fff;
  padding: 0 15px;
  position: relative;
}
.grip { position: absolute; right: 1px; bottom: 1px; width: 8px; height: 8px; }
.item { border-bottom: 1px solid #d8d8d8; }
.item-first { padding: 18px 0 20px; }
.item-open { padding: 14px 0 13px; }
.item-last { padding: 14px 0 20px; }
.item-head { display: flex; align-items: center; height: 26px; padding: 0 5px 0 4px; }
.item-head h2 {
  margin: 0 0 0 7px;
  font-size: 16.500px;
  font-weight: 700;
  line-height: 26px;
  letter-spacing: .05px;
}
.ic20 { width: 20px; height: 20px; flex: none; color: #46008a; }
.view {
  margin-left: 10px;
  font-size: 12.500px;
  text-decoration: underline;
  color: #46008a;
  padding-top: 1px;
}
.chev { width: 12px; height: 8px; margin-left: auto; margin-right: 2px; margin-top: 3px; color: #46008a; }
.chev-up { transform: rotate(180deg); }
.datasets { list-style: none; margin: 17px 0 0; padding: 0 5px; }
.ds {
  display: flex;
  align-items: center;
  height: 25px;
  font-size: 12.500px;
  font-weight: 700;
  letter-spacing: .1px;
  color: #a68fcf;
}
.ds-on { color: #46008a; }
.radio {
  width: 16px;
  height: 16px;
  border-radius: 50%;
  border: 1px solid #e8e8ea;
  background: #fff;
  flex: none;
  margin-right: 14px;
  position: relative;
}
.ds-on .radio { border-color: #c8c4d0; }
.ds-on .radio::after {
  content: "";
  position: absolute;
  left: 4px;
  top: 4px;
  width: 6px;
  height: 6px;
  border-radius: 50%;
  background: #46008a;
}
.badge {
  margin-left: auto;
  width: 29px;
  height: 19px;
  border-radius: 10px;
  background: #a68bc9;
  color: #fff;
  font-size: 11px;
  font-weight: 700;
  line-height: 19px;
  text-align: center;
}
.badge-w { width: 40px; }
.ds-on .badge { background: #46008a; }

/* properties */
.props { padding: 19px 20px 0; flex: 1; }
.props h3 { margin: 0; font-size: 17px; font-weight: 700; line-height: 24px; }
.prop-row {
  display: flex;
  align-items: center;
  justify-content: space-between;
  font-size: 14.500px;
  color: #4e1592;
  border-bottom: 1px solid #d8d8d8;
}
.prop-row label { letter-spacing: .1px; }
.prop-name { margin-top: 17px; height: 40px; padding-bottom: 16px; }
.input {
  width: 188px;
  height: 24px;
  border-radius: 12px;
  background: #fff;
  border: 2px solid #dcdcdc;
  font-size: 12.500px;
  font-weight: 700;
  padding-left: 6px;
  line-height: 20px;
  color: #46008a;
}
.prop-coef { height: 59px; }
.select {
  width: 192px;
  height: 26px;
  border-radius: 13px;
  background: #fff;
  border: 1px solid #dfdfdf;
  font-size: 12.500px;
  padding: 0 11px;
  display: flex;
  align-items: center;
  justify-content: space-between;
  letter-spacing: .5px;
}
.tri {
  width: 0;
  height: 0;
  border-left: 6px solid transparent;
  border-right: 6px solid transparent;
  border-top: 6px solid #46008a;
}
.entities-label { margin-top: 16px; font-size: 14.500px; line-height: 20px; color: #4e1592; letter-spacing: .1px; }
.ent-body {
  display: flex;
  align-items: center;
  margin-top: 19px;
  margin-left: -1px;
  height: 20px;
  font-size: 12.500px;
}
.ent-body b { margin-left: 7px; letter-spacing: .3px; }
.ent-child {
  display: flex;
  align-items: center;
  height: 28px;
  font-size: 12.500px;
  padding-left: 9px;
}
.ent-body + .ent-child { margin-top: 4px; }
.ic-sub { width: 15px; height: 12px; flex: none; margin-top: -3px; color: #46008a; }
.check {
  width: 16px;
  height: 16px;
  margin-left: 10px;
  border-radius: 3px;
  border: 1px solid #d8d8d8;
  background: #fff;
  display: flex;
  align-items: center;
  justify-content: center;
  color: #46008a;
}
.check svg { width: 10px; height: 8px; }
.ic-cubes { width: 17px; height: 17px; margin-left: 8px; color: #46008a; }
.ent-child b { margin-left: 5px; letter-spacing: .35px; }

/* canvas */
.canvas {
  flex: 1;
  position: relative;
  display: flex;
  flex-direction: column;
  background-color: #f4f4f4;
  background-image: radial-gradient(circle, #d6d6d6 1px, transparent 1.300px);
  background-size: 24px 24px;
}
.toolbar { display: flex; justify-content: center; gap: 16px; margin-top: 48px; height: 64px; }
.tgroup {
  display: flex;
  align-items: center;
  background: #fff;
  border-radius: 32px;
  height: 64px;
  flex: none;
}
.g-cubes { width: 192px; padding: 0 16px; gap: 32px; }
.g-axes { width: 355px; padding: 0 10px; gap: 19px; }
.g-rot { width: 105px; padding: 0 14px; gap: 13px; }
.g-city { width: 104px; padding: 0 14px; gap: 12px; }
.g-s60 { width: 60px; justify-content: center; }
.g-s61 { width: 61px; justify-content: center; }
.g-s64 { width: 64px; justify-content: center; }
.hex { width: 32px; height: 36px; flex: none; }
.axis { width: 40px; height: 32px; flex: none; }
.axis-off { opacity: .32; }
.ax-t { font-family: Inter, sans-serif; font-size: 10.500px; font-weight: 700; fill: #7a00e0; }
.rot { width: 32px; height: 36px; flex: none; margin-top: -4px; }
.rot-t { font-family: Inter, sans-serif; font-size: 10px; font-weight: 700; fill: #9a00ee; text-anchor: middle; letter-spacing: -.3px; }
.city { width: 28px; height: 32px; margin: 0 2px; flex: none; }
.ic-pick { width: 30px; height: 32px; }
.hex-grid { width: 30px; height: 34px; }
.rainbow {
  width: 29px;
  height: 10px;
  position: relative;
  background: linear-gradient(90deg, #f00000 0%, #ff8800 14%, #ffee00 28%, #00e840 48%, #00d8c0 64%, #2050ff 82%, #5a00d0 100%);
}
.rainbow-line {
  position: absolute;
  left: 9px;
  top: -5px;
  width: 1px;
  height: 18px;
  background: #46008a;
}
.camera { width: 30px; height: 24px; }

.reset-row { height: 32px; margin-top: 8px; padding-left: 450px; }
.reset {
  display: flex;
  align-items: center;
  width: 65px;
  height: 32px;
  border: 0;
  border-radius: 16px;
  background: #fff;
  color: #46008a;
  font-family: inherit;
  font-size: 12.500px;
  font-weight: 700;
  padding: 0 0 2px 8px;
  white-space: pre;
}
.reset-ic { font-size: 12px; font-family: "DejaVu Sans", sans-serif; }

.stage { height: 646px; position: relative; }
.heat { position: absolute; left: 260px; top: 48px; width: 780px; height: 530px; }
.te { fill: #00b894; }
.gr { fill: #00e84a; }
.lg { fill: #c9ffbe; }
.wh { fill: #fffffb; }
.ye { fill: #f6ff8d; }
.or { fill: #ffc917; }
.re { fill: #ff0000; }
.dr { fill: #d00000; }
.bk { fill: #5a0000; }
.ln { stroke: #1c1c1c; stroke-width: 2; }

.pill-row { display: flex; justify-content: center; padding-right: 8px; height: 40px; }
.pill {
  display: flex;
  align-items: center;
  height: 40px;
  border-radius: 20px;
  background: #fff;
  font-size: 16px;
  font-weight: 700;
  letter-spacing: .35px;
  color: #46008a;
  padding-bottom: 2px;
}
.pill-title { width: 359px; justify-content: center; }
.pill-mean { width: 128px; margin-left: 18px; padding-left: 16px; font-size: 17px; }
.pill-wind { width: 113px; margin-left: 26px; padding-left: 18px; font-size: 17px; }
.pill-ic { width: 16px; height: 16px; margin-right: 8px; }
.pill-ic-w { margin-right: 6px; }
.pill-chev { width: 16px; height: 10px; margin-left: 8px; }
.legend { width: 744px; margin: 16px auto 0; position: relative; }
.legend-labels {
  height: 36px;
  border-radius: 18px;
  background: #fff;
  padding: 0 20px;
  display: grid;
  grid-template-columns: repeat(11, 64px);
  font-size: 12.500px;
  font-weight: 700;
  letter-spacing: -.3px;
  text-align: center;
  line-height: 36px;
}
.legend-labels span { position: relative; }
.legend-labels span::after {
  content: "";
  position: absolute;
  left: 32px;
  bottom: 0;
  width: 1px;
  height: 7px;
  background: #46008a;
}
.legend-bar { display: flex; width: 640px; height: 12px; margin-left: 52px; }
.legend-bar i { flex: 1; }
.s1 { background: #009bdb; }
.s2 { background: #00b894; }
.s3 { background: #00e84a; }
.s4 { background: #c9ffbe; }
.s5 { background: #fffffb; }
.s6 { background: #f6ff8d; }
.s7 { background: #ffc917; }
.s8 { background: #ff0000; }
.s9 { background: #d00000; }
.s10 { background: #5a0000; }
.triad { position: absolute; left: 1170px; top: 829px; width: 90px; height: 90px; }
```
